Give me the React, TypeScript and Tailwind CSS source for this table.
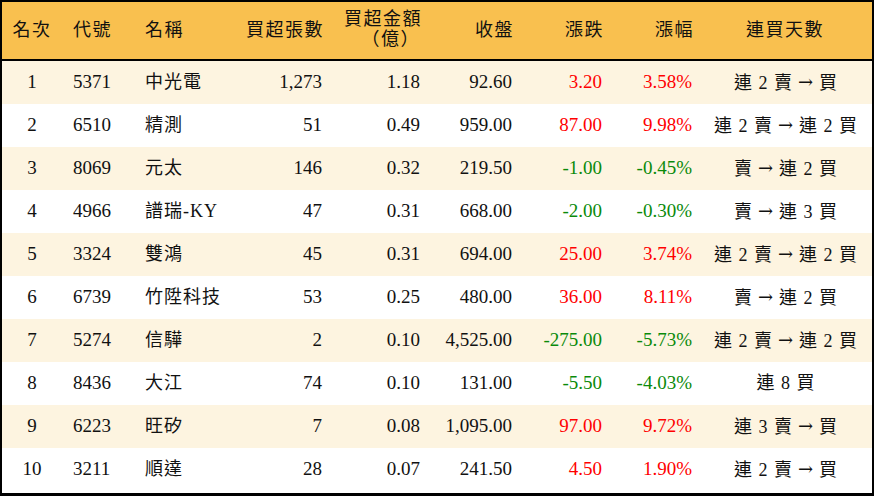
import React from "react";

type Row = {
  rank: number;
  code: string;
  name: string;
  lots: string;
  amount: string;
  close: string;
  change: string;
  pct: string;
  streak: string;
};

const rows: Row[] = [
  { rank: 1, code: "5371", name: "中光電", lots: "1,273", amount: "1.18", close: "92.60", change: "3.20", pct: "3.58%", streak: "連 2 賣 → 買" },
  { rank: 2, code: "6510", name: "精測", lots: "51", amount: "0.49", close: "959.00", change: "87.00", pct: "9.98%", streak: "連 2 賣 → 連 2 買" },
  { rank: 3, code: "8069", name: "元太", lots: "146", amount: "0.32", close: "219.50", change: "-1.00", pct: "-0.45%", streak: "賣 → 連 2 買" },
  { rank: 4, code: "4966", name: "譜瑞-KY", lots: "47", amount: "0.31", close: "668.00", change: "-2.00", pct: "-0.30%", streak: "賣 → 連 3 買" },
  { rank: 5, code: "3324", name: "雙鴻", lots: "45", amount: "0.31", close: "694.00", change: "25.00", pct: "3.74%", streak: "連 2 賣 → 連 2 買" },
  { rank: 6, code: "6739", name: "竹陞科技", lots: "53", amount: "0.25", close: "480.00", change: "36.00", pct: "8.11%", streak: "賣 → 連 2 買" },
  { rank: 7, code: "5274", name: "信驊", lots: "2", amount: "0.10", close: "4,525.00", change: "-275.00", pct: "-5.73%", streak: "連 2 賣 → 連 2 買" },
  { rank: 8, code: "8436", name: "大江", lots: "74", amount: "0.10", close: "131.00", change: "-5.50", pct: "-4.03%", streak: "連 8 買" },
  { rank: 9, code: "6223", name: "旺矽", lots: "7", amount: "0.08", close: "1,095.00", change: "97.00", pct: "9.72%", streak: "連 3 賣 → 買" },
  { rank: 10, code: "3211", name: "順達", lots: "28", amount: "0.07", close: "241.50", change: "4.50", pct: "1.90%", streak: "連 2 賣 → 買" },
];

const cols = "grid grid-cols-[60px_73px_95px_100px_98px_92px_90px_90px_1fr]";
const font = { fontFamily: '"Liberation Serif", "Noto Sans CJK TC", serif' };

function Streak({ text }: { text: string }) {
  const parts = text.split(" → ");
  return (
    <span className="whitespace-nowrap tracking-[1px]">
      {parts.map((p, i) => (
        <React.Fragment key={i}>
          {i > 0 && (
            <span className="inline-block mx-[5px] text-[18px] align-[1px]" style={{ fontFamily: '"DejaVu Serif", serif' }}>
              →
            </span>
          )}
          {p}
        </React.Fragment>
      ))}
    </span>
  );
}

export default function App() {
  return (
    <div className="w-[874px] h-[496px] bg-white" style={font}>
      <div className="h-full border-2 border-b-[3px] border-black overflow-hidden">
        <div className={`${cols} h-[59px] items-center bg-[#f9c04f] border-b-[2px] border-black text-[18px] tracking-[1.5px] text-[#111]`}>
          <div className="text-center">名次</div>
          <div className="pl-[11px]">代號</div>
          <div className="pl-[10px]">名稱</div>
          <div className="text-right pr-[6px]">買超張數</div>
          <div className="text-right pr-[6px] leading-[20px] pb-[4px]">
            <div>買超金額</div>
            <div className="pr-[2px]">（億）</div>
          </div>
          <div className="text-right pr-[6px]">收盤</div>
          <div className="text-right pr-[6px]">漲跌</div>
          <div className="text-right pr-[6px]">漲幅</div>
          <div className="text-center pr-[2px]">連買天數</div>
        </div>
        {rows.map((r, i) => {
          const up = !r.change.startsWith("-");
          const color = up ? "text-[#ff0000]" : "text-[#0a8a0a]";
          return (
            <div
              key={r.rank}
              className={`${cols} h-[43px] items-center text-[19px] text-[#111] ${i % 2 === 0 ? "bg-[#fdf4e0]" : "bg-white"}`}
            >
              <div className="text-center">{r.rank}</div>
              <div className="pl-[11px]">{r.code}</div>
              <div className="pl-[10px] text-[18px] tracking-[1px]">{r.name}</div>
              <div className="text-right pr-[8px]">{r.lots}</div>
              <div className="text-right pr-[8px]">{r.amount}</div>
              <div className="text-right pr-[8px]">{r.close}</div>
              <div className={`text-right pr-[8px] ${color}`}>{r.change}</div>
              <div className={`text-right pr-[8px] ${color}`}>{r.pct}</div>
              <div className="text-center text-[18px]">
                <Streak text={r.streak} />
              </div>
            </div>
          );
        })}
      </div>
    </div>
  );
}
